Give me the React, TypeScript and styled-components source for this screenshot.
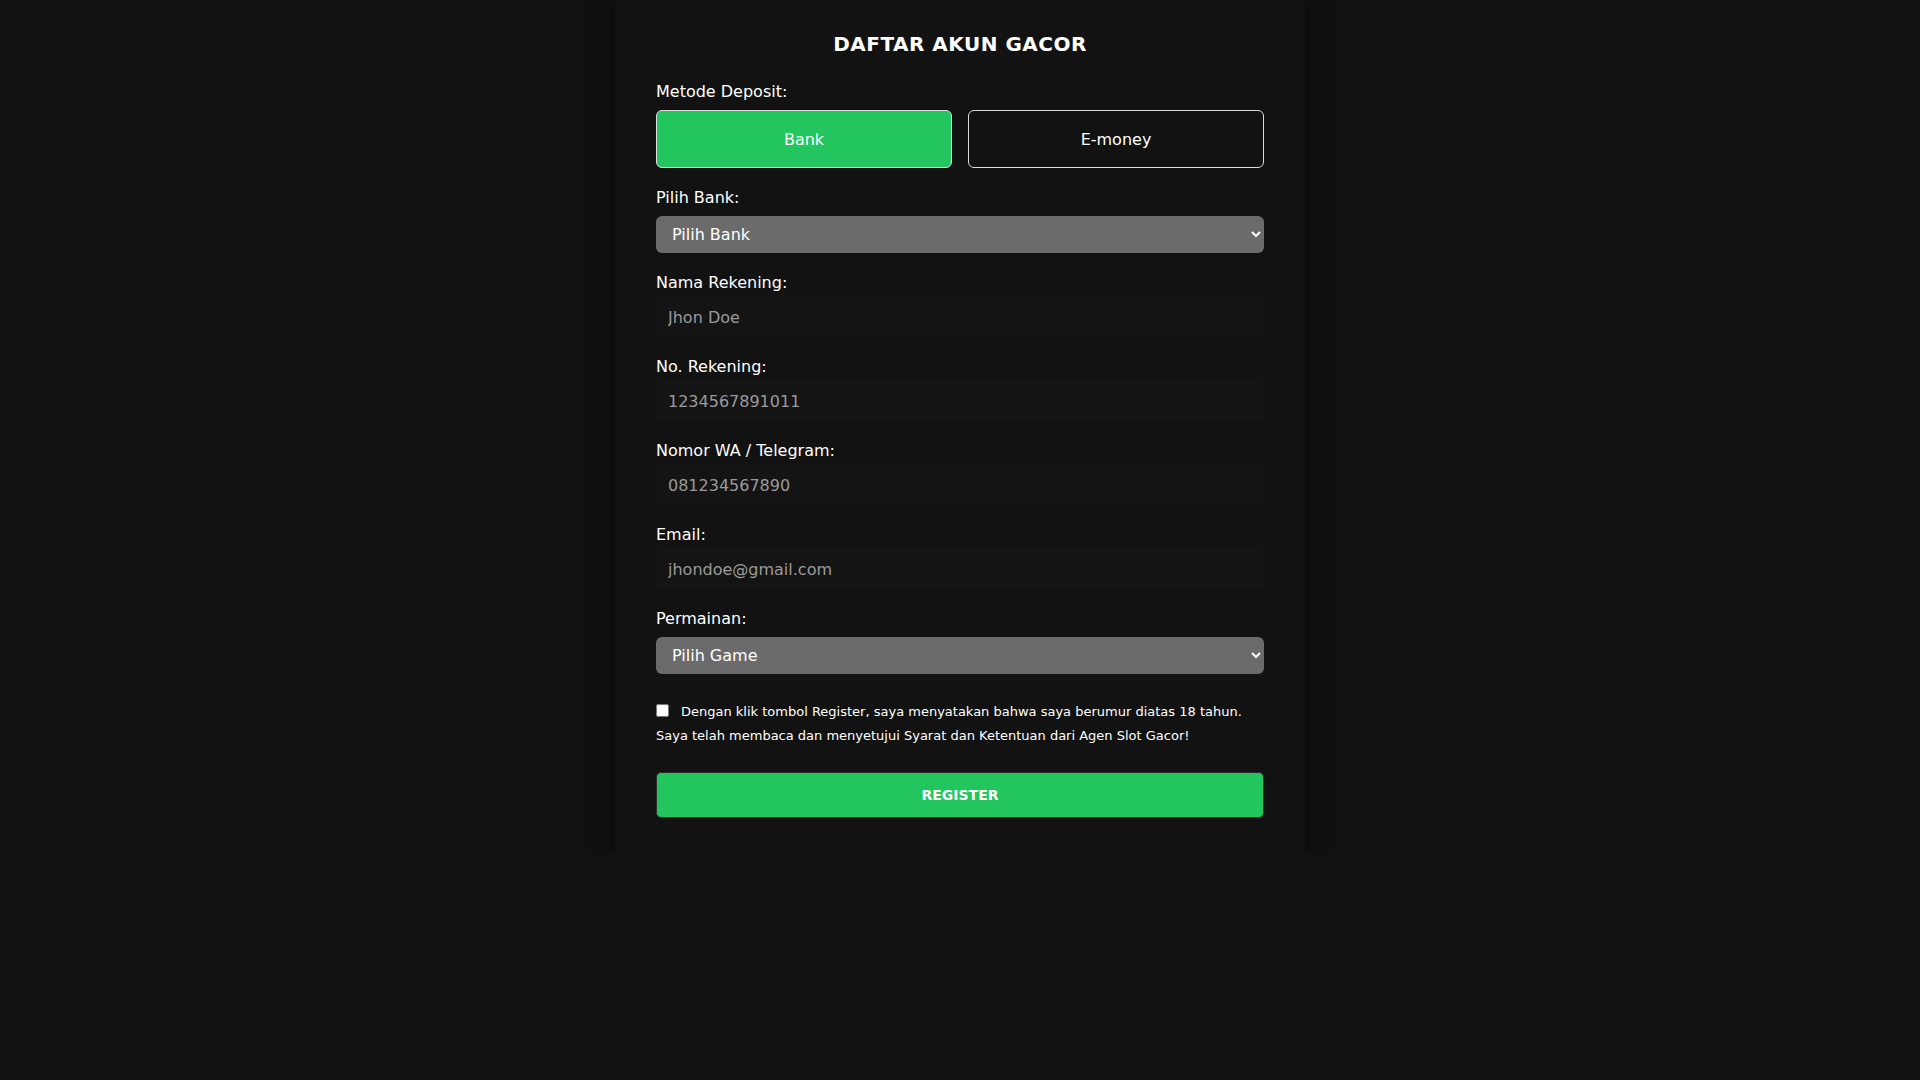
import React from "react";
import styled, { createGlobalStyle } from "styled-components";

const Global = createGlobalStyle`
  html, body { margin: 0; background: #111111; }
  body { font-family: "DejaVu Sans", sans-serif; color: #fff; }
  * { box-sizing: border-box; }
`;

const Card = styled.div`
  width: 690px;
  margin: 0 auto;
  padding: 32px 41px 35px;
  background: #121212;
  box-shadow: 0 0 20px rgba(0,0,0,0.5);
  display: flex;
  flex-direction: column;
`;

const Title = styled.h2`
  margin: 0 0 26px;
  text-align: center;
  font-size: 20px;
  font-weight: bold;
  letter-spacing: 0.5px;
`;

const Group = styled.div`
  display: flex;
  flex-direction: column;
  margin-bottom: 20px;
`;

const Label = styled.label`
  font-size: 16px;
  margin-bottom: 8px;
  line-height: 20px;
`;

const Toggle = styled.div`
  display: grid;
  grid-template-columns: 1fr 1fr;
  gap: 16px;
`;

const ToggleBtn = styled.button<{ $active?: boolean }>`
  height: 58px;
  border-radius: 6px;
  border: 1px solid #ddd;
  background: ${p => (p.$active ? "#22c55e" : "transparent")};
  color: #fff;
  font-family: "DejaVu Sans", sans-serif;
  font-size: 16px;
`;

const Select = styled.select`
  height: 37px;
  border: none;
  border-radius: 6px;
  background: #6b6b6b;
  color: #fff;
  font-family: "DejaVu Sans", sans-serif;
  font-size: 16px;
  padding: 0 12px;
`;

const Input = styled.input`
  height: 40px;
  border: none;
  border-radius: 4px;
  background: #141414;
  color: #fff;
  font-family: "DejaVu Sans", sans-serif;
  font-size: 16px;
  padding: 0 12px;
  margin-top: -4px;
  &::placeholder { color: #9a9a9a; }
`;

const Terms = styled.div`
  font-size: 13px;
  line-height: 24px;
  margin-top: 6px;
  margin-bottom: 24px;
`;

const Check = styled.input`
  width: 13px;
  height: 13px;
  margin: 0 12px 0 0;
  vertical-align: -1px;
`;

const Register = styled.button`
  height: 46px;
  border: 1px solid #2a2a2a;
  border-radius: 5px;
  background: #22c55e;
  color: #fff;
  font-family: "DejaVu Sans", sans-serif;
  font-weight: bold;
  font-size: 14px;
`;

const fields = [
  ["Nama Rekening:", "Jhon Doe"],
  ["No. Rekening:", "1234567891011"],
  ["Nomor WA / Telegram:", "081234567890"],
  ["Email:", "jhondoe@gmail.com"],
];

export default function App() {
  return (
    <>
      <Global />
      <Card>
        <Title>DAFTAR AKUN GACOR</Title>
        <Group>
          <Label>Metode Deposit:</Label>
          <Toggle>
            <ToggleBtn $active>Bank</ToggleBtn>
            <ToggleBtn>E-money</ToggleBtn>
          </Toggle>
        </Group>
        <Group>
          <Label>Pilih Bank:</Label>
          <Select><option>Pilih Bank</option></Select>
        </Group>
        {fields.map(([l, p]) => (
          <Group key={l}>
            <Label>{l}</Label>
            <Input placeholder={p} />
          </Group>
        ))}
        <Group>
          <Label>Permainan:</Label>
          <Select><option>Pilih Game</option></Select>
        </Group>
        <Terms>
          <Check type="checkbox" />
          Dengan klik tombol Register, saya menyatakan bahwa saya berumur diatas 18 tahun. Saya telah membaca dan menyetujui Syarat dan Ketentuan dari Agen Slot Gacor!
        </Terms>
        <Register>REGISTER</Register>
      </Card>
    </>
  );
}
